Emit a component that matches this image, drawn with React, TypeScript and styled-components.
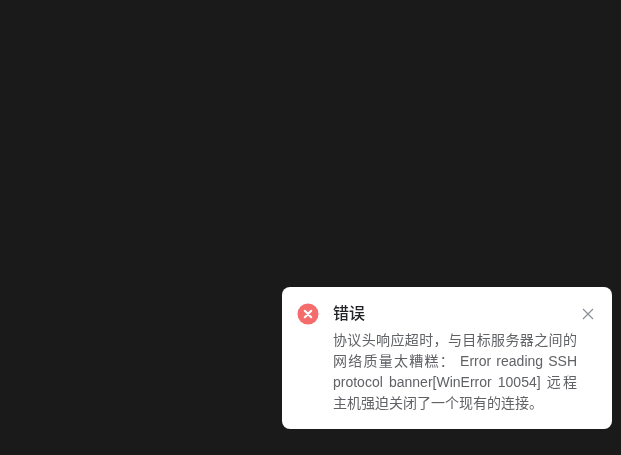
import React from 'react'
import styled, { createGlobalStyle } from 'styled-components'

const GlobalStyle = createGlobalStyle`
  html, body {
    margin: 0;
    height: 100%;
    background: #1a1a1a;
  }
  body {
    font-family: "Liberation Sans", "Noto Sans CJK SC", sans-serif;
  }
`

const Notification = styled.div`
  position: fixed;
  right: 9px;
  bottom: 26px;
  box-sizing: border-box;
  width: 330px;
  height: 142px;
  display: flex;
  padding: 15px 35px 0 14px;
  background: #fff;
  border-radius: 8px;
`

const StatusIcon = styled.svg`
  flex: none;
  width: 24px;
  height: 24px;
  margin-right: 13px;
`

const Group = styled.div`
  flex: 1;
  min-width: 0;
`

const Title = styled.h2`
  margin: 0;
  font-size: 16px;
  line-height: 24px;
  font-weight: 500;
  color: #222326;
`

const Content = styled.p`
  margin: 4px 0 0;
  font-size: 14px;
  line-height: 21px;
  color: #606266;
  text-align: justify;
`

const CloseButton = styled.button`
  position: absolute;
  top: 21px;
  right: 18px;
  width: 12px;
  height: 12px;
  padding: 0;
  border: 0;
  background: none;
  color: #8a8f99;
  display: flex;
`

// full-width comma and colon, as in the original message
const MESSAGE =
  '协议头响应超时\uFF0C与目标服务器之间的网络质量太糟糕\uFF1A Error reading SSH protocol banner[WinError 10054] 远程主机强迫关闭了一个现有的连接。'

const App = () => {
  return (
    <>
      <GlobalStyle />
      <Notification>
        <StatusIcon viewBox="0 0 24 24">
          <circle cx="12" cy="12" r="10.5" fill="#f56c6c" />
          <path
            d="M8.8 8.8 15.2 15.2M15.2 8.8 8.8 15.2"
            stroke="#fff"
            strokeWidth="2.2"
            strokeLinecap="round"
          />
        </StatusIcon>
        <Group>
          <Title>错误</Title>
          <Content>{MESSAGE}</Content>
        </Group>
        <CloseButton aria-label="close">
          <svg viewBox="0 0 12 12" width="12" height="12">
            <path d="M1 1 11 11M11 1 1 11" stroke="currentColor" strokeWidth="1.2" fill="none" />
          </svg>
        </CloseButton>
      </Notification>
    </>
  )
}

export default App
